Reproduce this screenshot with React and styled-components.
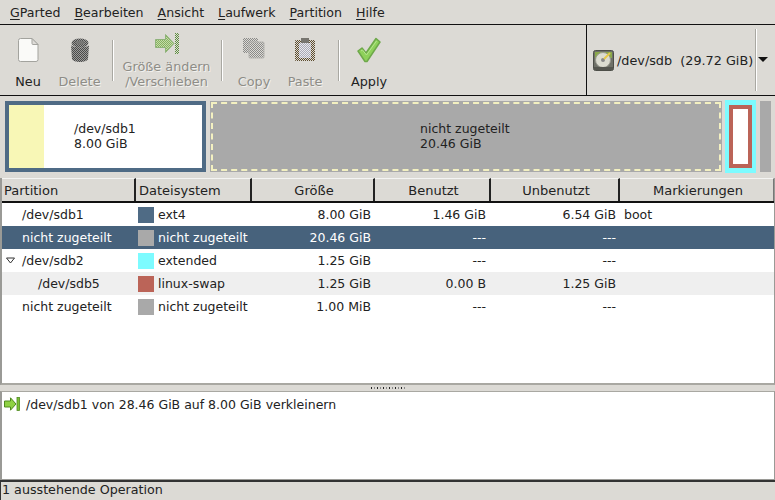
import React from 'react';
import styled, { createGlobalStyle } from 'styled-components';

const Global = createGlobalStyle`
  html, body { margin: 0; padding: 0; background: #dcdad5; }
  body { font-family: "DejaVu Sans", sans-serif; font-size: 12.5px; color: #1a1a1a; }
`;

const Window = styled.div`
  width: 775px; height: 500px; display: flex; flex-direction: column; overflow: hidden; background: #dcdad5;
`;
const MenuBar = styled.div`
  height: 24px; flex: none; display: flex; align-items: center; padding: 0 0 0 10px; gap: 14px;
  border-bottom: 1px solid #111; font-size: 12.6px; color: #222;
  span u { text-underline-offset: 2px; }
`;
const ToolRow = styled.div`
  height: 70px; flex: none; display: flex; border-bottom: 1px solid #111;
`;
const Toolbar = styled.div`
  width: 587px; flex: none; display: flex; border-right: 1px solid #111; padding-left: 5px; box-sizing: border-box; align-items: stretch;
`;
const ToolButton = styled.div`
  width: ${p => p.$w}px; flex: none; position: relative; display: flex; flex-direction: column; align-items: center;
  font-size: 12.8px;
  color: ${p => (p.$off ? '#8e8d87' : '#222')};
  text-shadow: ${p => (p.$off ? '1px 1px 0 #f2f1ee' : 'none')};
`;
const ToolIcon = styled.div`
  height: 27px; margin-top: ${p => p.$top ?? 13}px; display: flex; align-items: flex-start; justify-content: center;
`;
const ToolLabel = styled.div`
  margin-top: ${p => p.$mt ?? 9}px; line-height: 15px; text-align: center; white-space: nowrap;
`;
const ToolSep = styled.div`
  width: 2px; flex: none; margin: 15px 2px 14px ${p => p.$ml ?? 4}px; border-left: 1px solid #a9a8a2; border-right: 1px solid #fff; box-sizing: border-box;
`;
const DeviceBox = styled.div`
  flex: 1; display: flex; align-items: center; padding-left: 6px; position: relative; min-width: 0;
`;
const DeviceText = styled.span`
  margin-left: 3px; white-space: pre; color: #222; font-size: 12.8px;
`;
const DeviceSep = styled.div`
  position: absolute; left: 168px; top: 4px; bottom: 4px; width: 2px; border-left: 1px solid #a9a8a2; border-right: 1px solid #fff; box-sizing: border-box;
`;
const DeviceArrow = styled.div`
  position: absolute; left: 171px; top: 32px; width: 0; height: 0;
  border-left: 5px solid transparent; border-right: 5px solid transparent; border-top: 5px solid #111;
`;
const Map = styled.div`
  height: 82px; flex: none; display: flex; padding: 5px 3px 6px 5px; box-sizing: border-box; align-items: stretch;
`;
const MapPrimary = styled.div`
  width: 201px; flex: none; border: 4px solid #4f6b85; background: #fff; display: flex; box-sizing: border-box; margin-right: 4px; position: relative;
`;
const UsedFill = styled.div`
  width: 35px; background: #f8f7b6;
`;
const MapText = styled.div`
  line-height: 15px; color: #222; padding-left: ${p => p.$pl}px; padding-bottom: 2px; align-self: center;
`;
const MapFree = styled.div`
  width: 512px; flex: none; background: #a9a9a9; display: flex; align-items: center; position: relative; box-sizing: border-box; margin-right: 3px;
  &::after { content: ''; position: absolute; inset: 1px; border: 2px dashed #f3f0c0; }
`;
const MapExtended = styled.div`
  width: 31px; flex: none; background: #7dfbff; margin: -1px 4px -1px 0; padding: 5px 4px; box-sizing: border-box; display: flex;
`;
const MapSwap = styled.div`
  flex: 1; border: 4px solid #bb6458; background: #fff;
`;
const MapTail = styled.div`
  width: 11px; flex: none; background: #a9a9a9;
`;
const COLS = '134px 116px 123px 116px 129px 154px';
const Tree = styled.div`
  height: 207px; flex: none; display: flex; flex-direction: column; background: #fff;
  border-left: 2px solid #9a9a96; border-right: 1px solid #9a9a96; border-bottom: 2px solid #a9a8a2; box-sizing: border-box;
`;
const HeaderRow = styled.div`
  height: 25px; flex: none; display: grid; grid-template-columns: ${COLS}; background: #dcdad5; border-bottom: 2px solid #111; box-sizing: border-box;
  font-size: 13px;
`;
const HeaderCell = styled.div`
  display: flex; align-items: center; justify-content: ${p => (p.$center ? 'center' : 'flex-start')};
  padding-left: 3px; box-sizing: border-box; border-right: 2px solid #222; border-top: 1px solid #f4f4f2; white-space: nowrap; color: #222;
  &:first-child { padding-left: 2px; }
  &:last-child { border-right: 1px solid #777; }
`;
const Row = styled.div`
  height: 23px; flex: none; display: grid; grid-template-columns: ${COLS}; align-items: center;
  background: ${p => (p.$selected ? '#47627c' : p.$alt ? '#efefef' : '#fff')};
  color: ${p => (p.$selected ? '#fff' : '#222')};
`;
const Cell = styled.div`
  white-space: nowrap; position: relative; box-sizing: border-box;
  padding-left: ${p => p.$pl ?? 0}px; padding-right: ${p => p.$pr ?? 0}px;
  text-align: ${p => (p.$right ? 'right' : 'left')};
`;
const FsCell = styled.div`
  display: flex; align-items: center; gap: 4px; padding-left: 2px; white-space: nowrap;
`;
const Swatch = styled.span`
  width: 16px; height: 16px; flex: none; background: ${p => p.$c};
`;
const Expander = styled.span`
  position: absolute; left: 4px; top: 0; display: flex;
`;
const Handle = styled.div`
  height: 6px; flex: none; display: flex; justify-content: center; align-items: center;
`;
const Dots = styled.div`
  width: 36px; height: 2px; margin-left: 3px;
  background: repeating-linear-gradient(90deg, #222 0 1px, #dcdad5 1px 3px, #888 3px 4px, #dcdad5 4px 6px);
`;
const Log = styled.div`
  height: 89px; flex: none; background: #fff; border-left: 2px solid #9a9a96; border-right: 1px solid #9a9a96; border-bottom: 1px solid #9a9a96; border-top: 1px solid #a9a8a2;
  box-sizing: border-box; display: flex; align-items: flex-start; padding: 5px 0 0 2px; gap: 6px; color: #222;
`;
const LogText = styled.span`
  line-height: 15px;
`;
const Status = styled.div`
  flex: 1; border-top: 2px solid #333; border-left: 1px solid #333; padding: 0 0 0 1px; line-height: 16px; color: #222; white-space: nowrap; font-size: 12.7px;
`;

const Dither = ({ id, a, b }) => (
  <pattern id={id} width="2" height="2" patternUnits="userSpaceOnUse">
    <rect width="2" height="2" fill={a} />
    <rect width="1" height="1" fill={b} />
    <rect x="1" y="1" width="1" height="1" fill={b} />
  </pattern>
);

const NewIcon = () => (
  <svg width="21" height="24" viewBox="0 0 21 24">
    <path d="M2.500 0.500h11.500l6 6v15a2 2 0 0 1-2 2h-15.500a2 2 0 0 1-2-2v-19a2 2 0 0 1 2-2z" fill="#fafaf8" stroke="#a3a39e" />
    <path d="M14 0.500v5a1 1 0 0 0 1 1h5z" fill="#dedcd8" stroke="#a3a39e" strokeLinejoin="round" />
  </svg>
);
const TrashIcon = () => (
  <svg width="22" height="25" viewBox="0 0 22 25">
    <defs><Dither id="tr" a="#4a4a49" b="#9d9d9b" /></defs>
    <ellipse cx="11" cy="5" rx="8.500" ry="4.500" fill="url(#tr)" />
    <ellipse cx="11" cy="4.500" rx="4.500" ry="2" fill="#777775" />
    <path d="M2 7c1 3 17 3 18 0l-1 14c-1 4-15 4-16 0z" fill="url(#tr)" />
  </svg>
);
const ResizeIcon = () => (
  <svg width="24" height="21" viewBox="0 0 24 21">
    <defs>
      <Dither id="rz" a="#dcdad5" b="#5f9040" />
      <Dither id="rf" a="#c4dca8" b="#86b060" />
    </defs>
    <path d="M0.500 6.500h10V1.500l8.500 9-8.500 9v-5h-10z" fill="url(#rf)" stroke="#8fb37a" />
    <rect x="20" y="0" width="4" height="21" fill="url(#rz)" />
  </svg>
);
const SmallArrow = () => (
  <svg width="16" height="14" viewBox="0 0 16 14">
    <path d="M0.500 4h6V0.800L12 7l-5.500 6.200V10h-6z" fill="#8fd143" stroke="#4e8a1e" />
    <rect x="13" y="0.500" width="2.500" height="13" fill="#7cc035" stroke="#4e8a1e" strokeWidth="0.800" />
  </svg>
);
const CopyIcon = () => (
  <svg width="24" height="24" viewBox="0 0 24 24">
    <defs><Dither id="cp" a="#dcdad5" b="#8a8a88" /></defs>
    <rect x="1" y="0" width="15" height="15" fill="url(#cp)" />
    <rect x="7" y="4" width="15" height="16" rx="1" fill="url(#cp)" stroke="#b5b4b0" />
  </svg>
);
const PasteIcon = () => (
  <svg width="20" height="24" viewBox="0 0 20 24">
    <defs>
      <Dither id="pa" a="#dcdad5" b="#5d4c2e" />
      <Dither id="pb" a="#e9e9ee" b="#a9a9b5" />
    </defs>
    <rect x="0" y="2" width="20" height="21" rx="1" fill="url(#pa)" />
    <rect x="4" y="5" width="12" height="15" fill="url(#pb)" />
    <rect x="6" y="0" width="8" height="5" fill="#77756f" />
  </svg>
);
const ApplyIcon = () => (
  <svg width="24" height="26" viewBox="0 0 24 26">
    <path d="M1 14l4-3 4 5L19 1.500l4 3.500L10 24.500H8z" fill="#8ed15a" stroke="#6ea84a" strokeWidth="1.500" strokeLinejoin="round" />
    <path d="M4 14l1.500-1 4 5L19.500 4" fill="none" stroke="#b6e68f" strokeWidth="1" />
  </svg>
);
const DiskIcon = () => (
  <svg width="21" height="21" viewBox="0 0 21 21">
    <rect x="0.500" y="0.500" width="20" height="20" rx="2" fill="#6f7168" stroke="#4d4e48" />
    <path d="M2 2h17v6H2z" fill="#8aa84a" />
    <circle cx="10" cy="10" r="7.500" fill="#dcdcd0" stroke="#9a9a90" />
    <circle cx="10" cy="10" r="2" fill="#888" />
    <path d="M11 9l6-6" stroke="#e6c84a" strokeWidth="2" />
    <rect x="1" y="17" width="19" height="3" fill="#55564f" />
  </svg>
);

const menus = [['G', 'Parted'], ['B', 'earbeiten'], ['A', 'nsicht'], ['L', 'aufwerk'], ['P', 'artition'], ['H', 'ilfe']];
const heads = [['Partition'], ['Dateisystem'], ['Größe', 1], ['Benutzt', 1], ['Unbenutzt', 1], ['Markierungen', 1]];
const rows = [
  { name: '/dev/sdb1', pl: 20, c: '#4f6b85', fs: 'ext4', size: '8.00 GiB', used: '1.46 GiB', free: '6.54 GiB', flag: 'boot' },
  { name: 'nicht zugeteilt', pl: 20, c: '#a9a9a9', fs: 'nicht zugeteilt', size: '20.46 GiB', used: '---', free: '---', selected: true },
  { name: '/dev/sdb2', pl: 20, c: '#7dfbff', fs: 'extended', size: '1.25 GiB', used: '---', free: '---', open: true },
  { name: '/dev/sdb5', pl: 36, c: '#bb6458', fs: 'linux-swap', size: '1.25 GiB', used: '0.00 B', free: '1.25 GiB', alt: true },
  { name: 'nicht zugeteilt', pl: 20, c: '#a9a9a9', fs: 'nicht zugeteilt', size: '1.00 MiB', used: '---', free: '---' },
];

export default function App() {
  return (
    <Window>
      <Global />
      <MenuBar>
        {menus.map(([k, r]) => <span key={k}><u>{k}</u>{r}</span>)}
      </MenuBar>
      <ToolRow>
        <Toolbar>
          <ToolButton $w={46}><ToolIcon><NewIcon /></ToolIcon><ToolLabel>Neu</ToolLabel></ToolButton>
          <ToolButton $w={57} $off><ToolIcon><TrashIcon /></ToolIcon><ToolLabel>Delete</ToolLabel></ToolButton>
          <ToolSep />
          <ToolButton $w={101} $off><ToolIcon $top={8}><ResizeIcon /></ToolIcon><ToolLabel $mt={-1}>Größe ändern<br />/Verschieben</ToolLabel></ToolButton>
          <ToolSep />
          <ToolButton $w={58} $off><ToolIcon><CopyIcon /></ToolIcon><ToolLabel>Copy</ToolLabel></ToolButton>
          <ToolButton $w={44} $off><ToolIcon><PasteIcon /></ToolIcon><ToolLabel>Paste</ToolLabel></ToolButton>
          <ToolSep $ml={11} />
          <ToolButton $w={54}><ToolIcon $top={12}><ApplyIcon /></ToolIcon><ToolLabel $mt={10}>Apply</ToolLabel></ToolButton>
        </Toolbar>
        <DeviceBox>
          <DiskIcon />
          <DeviceText>/dev/sdb  (29.72 GiB)</DeviceText>
          <DeviceSep />
          <DeviceArrow />
        </DeviceBox>
      </ToolRow>
      <Map>
        <MapPrimary>
          <UsedFill />
          <MapText $pl={30}>/dev/sdb1<br />8.00 GiB</MapText>
        </MapPrimary>
        <MapFree><MapText $pl={210}>nicht zugeteilt<br />20.46 GiB</MapText></MapFree>
        <MapExtended><MapSwap /></MapExtended>
        <MapTail />
      </Map>
      <Tree>
        <HeaderRow>
          {heads.map(([t, c]) => <HeaderCell key={t} $center={c}>{t}</HeaderCell>)}
        </HeaderRow>
        {rows.map((r, i) => (
          <Row key={i} $selected={r.selected} $alt={r.alt}>
            <Cell $pl={r.pl}>
              {r.open && (
                <Expander>
                  <svg width="10" height="16" viewBox="0 0 10 16"><path d="M0.500 5h8l-4 5z" fill="#fff" stroke="#333" /></svg>
                </Expander>
              )}
              {r.name}
            </Cell>
            <FsCell><Swatch $c={r.c} />{r.fs}</FsCell>
            <Cell $right $pr={4}>{r.size}</Cell>
            <Cell $right $pr={5}>{r.used}</Cell>
            <Cell $right $pr={4}>{r.free}</Cell>
            <Cell $pl={4}>{r.flag}</Cell>
          </Row>
        ))}
      </Tree>
      <Handle><Dots /></Handle>
      <Log>
        <SmallArrow />
        <LogText>/dev/sdb1 von 28.46 GiB auf 8.00 GiB verkleinern</LogText>
      </Log>
      <Status>1 ausstehende Operation</Status>
    </Window>
  );
}
